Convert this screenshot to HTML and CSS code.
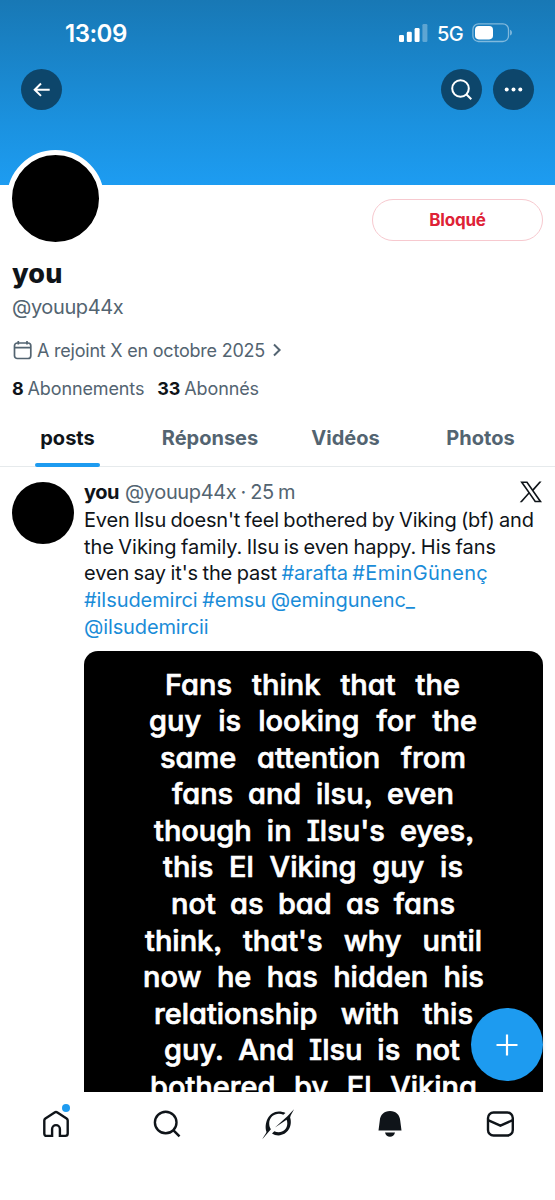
FILE: index.html
```
<!DOCTYPE html>
<html lang="fr">
<head>
<meta charset="utf-8">
<title>you (@youup44x)</title>
<link rel="stylesheet" href="styles.css">
</head>
<body>
<div class="screen">
  <header class="banner">
    <div class="status">
      <span class="clock">13:09</span>
      <div class="status-right">
        <svg class="signal" width="29" height="18" viewBox="0 0 29 18"><rect x="0" y="11" width="5" height="7" rx="1.3"/><rect x="7.8" y="7.7" width="5" height="10.3" rx="1.3"/><rect x="15.6" y="4" width="5" height="14" rx="1.3"/><rect x="23.4" y="0" width="5" height="18" rx="1.3" opacity=".3"/></svg>
        <span class="network">5G</span>
        <svg class="battery" width="41" height="20" viewBox="0 0 41 20"><rect x=".9" y=".9" width="35.6" height="17.6" rx="5.6" fill="none" stroke="#fff" stroke-opacity=".45" stroke-width="1.3"/><rect x="3" y="3" width="18" height="13.4" rx="3.8"/><path d="M38.2 6.8c2.2.9 2.2 4.9 0 5.800z" opacity=".5"/></svg>
      </div>
    </div>
    <nav class="actions">
      <button class="round" aria-label="Retour"><svg width="20" height="20" viewBox="0 0 20 20"><path d="M17.700 9.700H2.500M9 3.500 2.700 9.700l6.300 6.200"/></svg></button>
      <button class="round push" aria-label="Rechercher"><svg width="24" height="24" viewBox="0 0 24 24"><circle cx="10.500" cy="10.500" r="8.300"/><path d="m16.500 16.500 4.800 4.800"/></svg></button>
      <button class="round" aria-label="Plus"><svg class="dots" width="20" height="6" viewBox="0 0 20 6"><circle cx="2.700" cy="2.500" r="2"/><circle cx="9.500" cy="2.500" r="2"/><circle cx="16.300" cy="2.500" r="2"/></svg></button>
    </nav>
  </header>

  <section class="profile">
    <div class="profile-top">
      <div class="avatar-large"></div>
      <button class="blocked">Bloqué</button>
    </div>
    <h1 class="name">you</h1>
    <p class="handle">@youup44x</p>
    <p class="joined">
      <svg width="20" height="20" viewBox="0 0 20 20"><rect x="2.500" y="3" width="16.300" height="15.500" rx="2.800"/><path d="M2.500 7.600h16M6.300 1v3.600M15 1v3.600"/></svg>
      <span class="joined-text">A rejoint X en octobre 2025</span>
      <svg class="chevron" width="10" height="14" viewBox="0 0 10 14"><path d="m2 1.500 5.600 5.500L2 12.500"/></svg>
    </p>
    <p class="counts"><span class="count"><b>8</b> Abonnements</span><span class="count followers"><b>33</b> Abonnés</span></p>
  </section>

  <nav class="tabs">
    <a class="tab active">posts</a>
    <a class="tab">Réponses</a>
    <a class="tab">Vidéos</a>
    <a class="tab">Photos</a>
  </nav>

  <article class="post">
    <div class="avatar-small"></div>
    <div class="post-body">
      <div class="post-head">
        <span class="author">you</span>
        <span class="meta">@youup44x · 25 m</span>
        <svg class="x-logo" width="24" height="24" viewBox="0 0 24 24"><path d="M1.200 1.500h7.200l5.300 7.500 6.700-7.500h2.200l-7.900 8.900 8.300 11.900h-7.200l-5.700-8.200-7.200 8.200H.7l8.500-9.600zM4.300 3.100l12.400 17.600h3.200L7.500 3.100z"/></svg>
      </div>
      <p class="text"><span class="tight">Even Ilsu doesn't feel bothered by Viking (bf) and</span><br><span class="wide">the Viking family. Ilsu is even happy. His fans</span><br>even say it's the past <a>#arafta</a> <a class="open">#EminGünenç</a><br><span class="wide"><a>#ilsudemirci</a> <a>#emsu</a> <a>@emingunenc_</a></span><br><a>@ilsudemircii</a></p>
      <div class="media">
        <p class="line w1">Fans think that the</p>
        <p class="line w2">guy is looking for the</p>
        <p class="line w3">same attention from</p>
        <p class="line w4">fans and ilsu, even</p>
        <p class="line w5">though in Ilsu's eyes,</p>
        <p class="line w6">this El Viking guy is</p>
        <p class="line w7">not as bad as fans</p>
        <p class="line w8">think, that's why until</p>
        <p class="line w9">now he has hidden his</p>
        <p class="line w10">relationship with this</p>
        <p class="line w11">guy. And Ilsu is not</p>
        <p class="line w12">bothered by El Viking</p>
      </div>
    </div>
  </article>

  <nav class="bottom">
    <a class="item"><span class="home"><svg width="30" height="30" viewBox="0 0 30 30"><path d="M3.300 11.400c0-.9.400-1.500 1.100-2L13.600 3.500c.9-.6 1.900-.6 2.800 0l9.200 5.900c.7.500 1.100 1.100 1.100 2v13.200c0 1.500-.8 2.300-2.300 2.300h-5.500v-6.900a3.900 3.900 0 0 0-7.800 0v6.900H5.600c-1.500 0-2.300-.8-2.300-2.300z"/></svg><i class="badge"></i></span></a>
    <a class="item"><svg width="30" height="30" viewBox="0 0 30 30"><circle cx="13.700" cy="13.500" r="10.800"/><path d="m21.500 21.300 6 6"/></svg></a>
    <a class="item"><svg class="solid" width="34" height="34" viewBox="0 0 34 34"><path d="M26.400 9.200 33 2.200c-1.800 3.600-3.300 5.400-3.900 8.400 2.800 8.200-2.500 17.800-11.600 17.800-2.500 0-4.700-.7-6.500-1.900l2.300-2.300c6.700 3 13-1.400 13-7.700 0-1.500-.2-2.600-.7-3.700L14 20.600zM22.300 7.800c-6.200-3-14.100 1-14.100 8.700 0 2.500.7 4.200 1.700 5.800L1.300 32.300c1.700-3.200 3.200-4.900 4.200-7.200C2.700 16.400 7.600 4.600 17.800 4.600c2.600 0 4.800.5 6.700 1.500z"/></svg></a>
    <a class="item bell"><svg class="solid" width="30" height="30" viewBox="0 0 30 30"><path d="M15 2c6 0 9.900 4.100 10.200 9.500l1.300 9.900h-23l1.300-9.900C5.100 6.100 9 2 15 2zM10 23.400h10c-.8 2.900-2.500 4.400-5 4.400s-4.200-1.500-5-4.400z"/></svg></a>
    <a class="item"><svg width="30" height="30" viewBox="0 0 30 30"><rect x="3" y="3.500" width="24.800" height="23" rx="5.500"/><path d="m3 11.200 12.400 5.400 12.400-5.400"/></svg></a>
  </nav>

  <button class="compose" aria-label="Nouveau post"><svg width="24" height="24" viewBox="0 0 24 24"><path d="M12 1.500v21M1.500 12h21"/></svg></button>
</div>
</body>
</html>
```
FILE: styles.css
```
* { box-sizing: border-box; }
body { margin: 0; background: #fff; color: #0f1419; font-family: Inter, "Liberation Sans", sans-serif; }
h1, p { margin: 0; }
button { font: inherit; padding: 0; border: 0; }
svg { display: block; fill: none; flex: none; }

.screen { position: relative; width: 555px; height: 1200px; overflow: hidden; display: flex; flex-direction: column; }

.banner { height: 185px; flex: none; background: linear-gradient(#1878b5, #1b92e0 68%, #1d9cf1); color: #fff; }
.status { height: 69px; padding: 0 42px 3px 65px; display: flex; align-items: center; justify-content: space-between; }
.clock { font-size: 24px; font-weight: 600; letter-spacing: -.5px; }
.status-right { display: flex; align-items: center; }
.status-right svg { fill: #fff; }
.signal { margin-top: -1px; }
.network { font-size: 20px; font-weight: 500; letter-spacing: -.6px; margin: 2px 9px 0 9px; }
.battery { margin-top: -1px; }
.actions { display: flex; gap: 11px; padding: 0 21px; }
.round { width: 41px; height: 41px; border-radius: 50%; background: #0d466b; display: grid; place-items: center; }
.round svg { stroke: #fff; stroke-width: 2; }
.round .dots { fill: #fff; stroke: none; }
.push { margin-left: auto; }

.profile { padding: 0 12px; height: 227px; flex: none; }
.profile-top { display: flex; justify-content: space-between; align-items: flex-start; height: 70px; }
.avatar-large { width: 97px; height: 97px; margin: -35px 0 0 -5px; border: 5px solid #fff; border-radius: 50%; background: #000; flex: none; }
.blocked { width: 171px; height: 42px; margin-top: 14px; border: 1.300px solid #f7c9cf; border-radius: 21px; background: #fff; color: #de2236; font-size: 17px; font-weight: 700; letter-spacing: -.2px; }
.name { font-size: 27px; line-height: 34px; font-weight: 800; letter-spacing: .1px; margin-top: 2px; }
.handle { font-size: 20px; line-height: 28px; color: #536471; letter-spacing: -.4px; margin-top: 2px; }
.joined { display: flex; align-items: center; height: 28px; margin-top: 15px; color: #536471; font-size: 18px; letter-spacing: -.22px; }
.joined svg { stroke: #536471; stroke-width: 1.700; }
.joined-text { margin-left: 5px; }
.joined .chevron { margin-left: 7px; stroke-width: 2; }
.counts { font-size: 18px; line-height: 28px; margin-top: 11px; color: #536471; display: flex; letter-spacing: -.12px; word-spacing: -1px; }
.counts b { color: #0f1419; }
.followers { margin-left: 13px; }

.tabs { height: 55px; flex: none; display: grid; grid-template-columns: 135px 150px 121px 149px; border-bottom: 1px solid #e6eaec; }
.tab { display: grid; place-items: center; position: relative; color: #536471; font-size: 20px; font-weight: 700; padding-bottom: 2px; }
.active { color: #0f1419; }
.active::after { content: ""; position: absolute; bottom: -1px; left: 35px; width: 65px; height: 4px; border-radius: 2px; background: #1d9bf0; }

.post { display: flex; gap: 10px; padding: 11px 12px 0; height: 625px; flex: none; overflow: hidden; }
.avatar-small { width: 62px; height: 62px; margin-top: 4px; border-radius: 50%; background: #000; flex: none; }
.post-body { width: 459px; }
.post-head { display: flex; align-items: center; height: 28px; font-size: 20px; }
.author { font-weight: 700; letter-spacing: -.5px; }
.meta { color: #536471; margin-left: 6px; letter-spacing: -.38px; word-spacing: -1px; }
.x-logo { margin: 0 0 1px auto; fill: #0f1419; fill-rule: evenodd; }
.text { font-size: 20px; line-height: 26.700px; margin-top: 1px; letter-spacing: -.12px; word-spacing: -1px; white-space: nowrap; }
.tight { letter-spacing: -.17px; }
.wide { letter-spacing: -.07px; }
.open { letter-spacing: .3px; }
.text a { color: #1a8cd8; }
.media { height: 480px; margin-top: 10px; padding-top: 16px; border-radius: 14px; background: #000; color: #fff; }
.line { font-size: 29px; line-height: 36.600px; font-weight: 500; white-space: nowrap; text-align: justify; text-align-last: justify; font-feature-settings: "cv11", "cv08", "ss03"; -webkit-text-stroke: .7px #fff; stroke-linejoin: round; }
.w1 { width: 295px; margin-left: 81px; }
.w2 { width: 328px; margin-left: 65px; }
.w3 { width: 306px; margin-left: 76px; }
.w4 { width: 282px; margin-left: 88px; }
.w5 { width: 320px; margin-left: 70px; }
.w6 { width: 300px; margin-left: 79px; }
.w7 { width: 284px; margin-left: 87px; }
.w8 { width: 337px; margin-left: 61px; }
.w9 { width: 341px; margin-left: 59px; }
.w10 { width: 319px; margin-left: 70px; }
.w11 { width: 296px; margin-left: 80px; }
.w12 { width: 327px; margin-left: 66px; }

.bottom { height: 108px; flex: none; display: grid; grid-template-columns: repeat(5, 111px); background: #fff; }
.item { height: 63px; display: grid; place-items: center; }
.item svg { stroke: #0f1419; stroke-width: 2.400; }
.item .solid { fill: #0f1419; stroke: none; }
.bell { padding-left: 2px; }
.home { position: relative; }
.badge { position: absolute; right: 1px; top: -5px; width: 8px; height: 8px; border-radius: 50%; background: #1d9bf0; }
.compose { position: absolute; right: 12px; top: 1008px; width: 72px; height: 73px; border-radius: 50%; background: #1d9bf0; display: grid; place-items: center; box-shadow: 0 1px 4px rgba(0, 0, 0, .15); }
.compose svg { stroke: #fff; stroke-width: 2.200; }
```
